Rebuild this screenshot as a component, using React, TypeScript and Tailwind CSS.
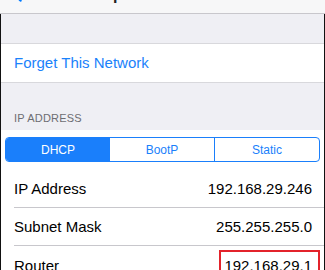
import React from "react";

function Row({ label, value, last, highlight }: { label: string; value: string; last?: boolean; highlight?: boolean }) {
  return (
    <div className="pl-[13px] bg-white">
      <div className={`relative h-[38px] flex items-center justify-between pr-[12px] pt-[2px] ${last ? "" : "border-b border-[#c8c7cc]"}`}>
        <span className="text-[15px] text-black">{label}</span>
        <span className="text-[15px] text-black">{value}</span>
        {highlight && (
          <div className="absolute left-[205px] top-[4px] w-[101px] h-[40px] border-2 border-[#e3232b]" />
        )}
      </div>
    </div>
  );
}

export default function App() {
  return (
    <div className="w-[325px] h-[270px] overflow-hidden bg-[#efeff4] font-['Liberation_Sans',Arial,sans-serif]">
      <div className="h-[45px] -mt-[31px] bg-[#f7f7f8] border-b border-[#c8c7cc] flex items-end pb-[10px] pl-[12px]">
        <div className="flex items-end text-[#007aff]">
          <svg width="10" height="17" viewBox="0 0 10 17" className="mb-[1px]">
            <path d="M8.5 1.5 L2 8.5 L8.5 15.5" fill="none" stroke="#007aff" strokeWidth="2.4" strokeLinecap="round" strokeLinejoin="round" />
          </svg>
          <span className="ml-[5px] text-[16px] leading-none text-[#7fb8ff]">Wi-Fi</span>
        </div>
        <span className="ml-[38px] text-[16px] leading-none font-bold text-[#222]">Sparkhonor 5GHz</span>
      </div>
      <div className="border-x border-[#111]">
        <div className="h-[29px]" />
        <div className="h-[40px] bg-white border-y border-[#d8d8dc] flex items-center pl-[13px] pt-[1px]">
          <span className="text-[15px] text-[#1a82fb]">Forget This Network</span>
        </div>
        <div className="h-[47px] flex items-end pb-[5px] pl-[13px]">
          <span className="text-[11px] leading-[13px] text-[#6d6d72] tracking-[0.2px]">IP ADDRESS</span>
        </div>
        <div className="bg-white pt-[7px] pb-[8px] px-[4px]">
          <div className="h-[25px] flex border border-[#1a7ffb] rounded-[4px] overflow-hidden text-[12px]">
            <div className="flex-1 flex items-center justify-center bg-[#1a7ffb] text-white">DHCP</div>
            <div className="flex-1 flex items-center justify-center text-[#1a7ffb]">BootP</div>
            <div className="flex-1 flex items-center justify-center text-[#1a7ffb] border-l border-[#1a7ffb]">Static</div>
          </div>
        </div>
        <Row label="IP Address" value="192.168.29.246" />
        <Row label="Subnet Mask" value="255.255.255.0" />
        <Row label="Router" value="192.168.29.1" last highlight />
      </div>
    </div>
  );
}
